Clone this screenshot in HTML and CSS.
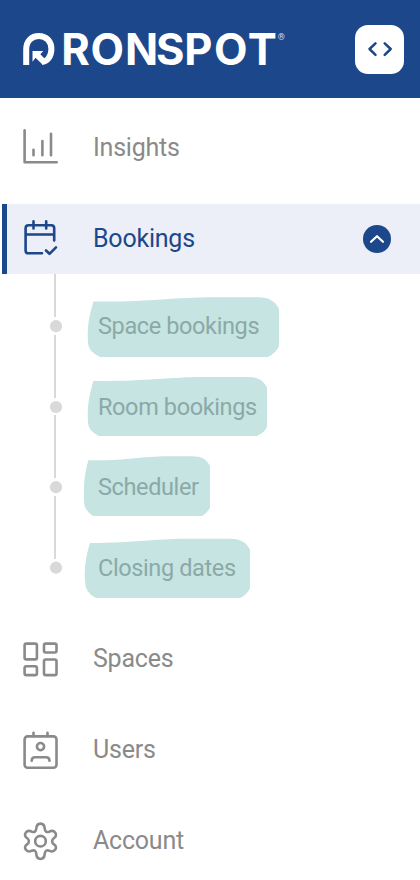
FILE: index.html
```html
<!DOCTYPE html>
<html lang="en">
<head>
<meta charset="utf-8">
<title>Ronspot</title>
<link rel="stylesheet" href="styles.css">
</head>
<body>
<header class="header">
  <svg class="logo" width="290" height="78" viewBox="20 10 290 78" role="img" aria-label="Ronspot">
    <path class="logo-mark" d="M26.2 65V49.500C26.200 41 31.500 36 38.800 36C46.400 36 51.400 41.500 51.400 49C51.400 56.500 47 61.800 42.200 61.800"/>
    <path class="logo-arrow" d="M32.500 51H43.300L40.300 54.300L45.500 59.500L43 65L35.500 57.800L32.500 61.800Z"/>
    <text class="logo-text" y="64.8" x="61.300 90.500 124.900 156 184.300 214 247.700">RONSPOT</text>
    <text class="logo-reg" x="277.7" y="39.9">®</text>
  </svg>
  <button class="toggle" aria-label="Collapse menu">
    <svg width="49" height="49" viewBox="0 0 49 49"><path d="M20.500 18.300L14.500 24L20.500 29.800M29.700 18.300L35.700 24L29.700 29.800"/></svg>
  </button>
</header>
<nav class="nav">
  <a class="item">
    <svg class="icon" viewBox="20 0 42 70"><path d="M24.600 17.300V49.300H56.700M33.500 36.800V42.200M42.400 28V42.200M51 20.800V42.200"/></svg>
    <span>Insights</span>
  </a>
  <a class="item active">
    <svg class="icon" viewBox="20 0 42 70"><path d="M42 49.300H28.500Q25.600 49.300 25.600 46.400V24.200Q25.600 21.200 28.500 21.200H51.300Q54.200 21.200 54.200 24.200V36.500M25.600 30.500H54.200M33.500 17.400V24.500M46.200 17.400V24.500M46 46.500L49.500 49.800L56 43.300"/></svg>
    <span>Bookings</span>
    <svg class="chevron" viewBox="0 0 28 28"><circle cx="14" cy="14" r="14"/><path d="M8 16.800L14 11.200L20 16.800"/></svg>
  </a>
  <div class="subnav">
    <svg class="rail" width="62" height="350" viewBox="0 274 62 350">
      <path d="M55 274V317M55 335V398M55 415V478M55 496V559"/>
      <circle cx="56" cy="326.200" r="6.100"/><circle cx="56" cy="407" r="6.100"/><circle cx="56" cy="487.200" r="6.100"/><circle cx="56" cy="567.700" r="6.100"/>
    </svg>
    <svg class="marks" width="220" height="350" viewBox="80 274 220 350">
      <path d="M93.500 301.500C155 302 170 297.200 215 297.200H258C269 297.200 275 301 279 309V346Q276 353 268 357H100Q88 351 88 343C87 325 89.500 315 93.500 301.500Z"/>
      <path d="M93.300 381C143 381.500 170 377 202 377H248C258 377 263 380 267 387.500V427Q264 433 257 436H99Q88 431 88 422C87 405 89.500 395 93.300 381Z"/>
      <path d="M88.300 460.200C125 461 140 456.200 168 456.200H192C202 456.200 206 459 210 466V508Q207 513 202 516H93Q84 510 84 502C83.500 485 84.500 474 88.300 460.200Z"/>
      <path d="M90 543C135 543 155 538.800 185 538.800H230C241 538.800 247 543 250 550V588Q247 595 240 598H96Q85 593 85 581C84 568 86 556 90 543Z"/>
    </svg>
    <ul class="sublist">
      <li>Space bookings</li>
      <li>Room bookings</li>
      <li>Scheduler</li>
      <li>Closing dates</li>
    </ul>
  </div>
  <a class="item">
    <svg class="icon" viewBox="20 0 42 70"><rect x="24.600" y="19.600" width="12.300" height="15.800" rx="1.700"/><rect x="44" y="19.600" width="12.500" height="8.900" rx="1.700"/><rect x="24.600" y="42.200" width="12.300" height="8.900" rx="1.700"/><rect x="44" y="35.500" width="12.500" height="15.600" rx="1.700"/></svg>
    <span>Spaces</span>
  </a>
  <a class="item">
    <svg class="icon" viewBox="20 0 42 70"><rect x="24.600" y="21.400" width="31.900" height="31.300" rx="3"/><path d="M33.500 17.800V21M47.500 17.800V21M31.700 45.700C31.700 42.800 33 42.300 35 42.300H46C48.500 42.300 49.500 43 49.500 45.700"/><circle cx="40.500" cy="31.600" r="3.600"/></svg>
    <span>Users</span>
  </a>
  <a class="item">
    <svg class="icon" viewBox="20 0 42 70"><path d="M36.300 22.500C36.700 16 44.300 16 44.700 22.500C44.900 25.600 46.700 26.700 49.200 25.700C54.500 23 58.500 29.200 54 32C51.500 33.800 51.500 36.600 54 38.400C58.500 41.200 54.500 47.400 49.200 44.700C46.700 43.700 44.900 44.800 44.700 47.900C44.300 54.600 36.700 54.600 36.300 47.900C36.100 44.800 34.300 43.700 31.800 44.700C26.500 47.400 22.500 41.200 27 38.400C29.500 36.600 29.500 33.800 27 32C22.500 29.200 26.500 23 31.800 25.700C34.300 26.700 36.100 25.600 36.300 22.500Z"/><circle cx="40.500" cy="35.200" r="5.300"/></svg>
    <span>Account</span>
  </a>
</nav>
</body>
</html>
```
FILE: styles.css
```css
* { box-sizing: border-box; }
body {
  margin: 0;
  background: #fff;
  font-family: Roboto, "Liberation Sans", sans-serif;
  color: #8a8a8a;
}
.header {
  display: flex;
  align-items: center;
  justify-content: space-between;
  height: 98px;
  padding: 0 16px 0 20px;
  background: #1c478a;
}
.logo { display: block; }
.logo-mark { fill: none; stroke: #fff; stroke-width: 6; }
.logo-arrow { fill: #fff; }
.logo-text {
  fill: #fff;
  font: 700 43.5px Inter, sans-serif;
}
.logo-reg { fill: #d5deeb; font: 9px Roboto, sans-serif; }
.toggle {
  width: 49px;
  height: 49px;
  padding: 0;
  border: 0;
  border-radius: 13px;
  background: #fff;
}
.toggle svg { display: block; }
.toggle path {
  fill: none;
  stroke: #1c478a;
  stroke-width: 2.5;
  stroke-linecap: round;
  stroke-linejoin: round;
}
.nav { padding-top: 15px; }
.item {
  display: flex;
  align-items: center;
  height: 70px;
  margin-bottom: 21px;
  padding: 0 29px 0 20px;
  font-size: 25px;
  letter-spacing: -0.22px;
}
.item span { margin: -2px 0 0 31px; }
.icon {
  flex: none;
  width: 42px;
  height: 70px;
  fill: none;
  stroke: #8a8a8a;
  stroke-width: 2.6;
  stroke-linecap: round;
  stroke-linejoin: round;
}
.active {
  margin: 0 0 0 2px;
  padding-left: 13px;
  border-left: 5px solid #1c478a;
  background: #eceff7;
  color: #1c478a;
}
.active .icon { stroke: #1c478a; }
.active .chevron { width: 28px; height: 28px; margin-left: auto; }
.chevron circle { fill: #1c478a; }
.chevron path {
  fill: none;
  stroke: #fff;
  stroke-width: 2.2;
  stroke-linecap: round;
  stroke-linejoin: round;
}
.subnav { position: relative; display: flex; height: 350px; }
.rail { flex: none; fill: #d9d9d9; }
.rail path { stroke: #d9d9d9; stroke-width: 2; }
.marks { position: absolute; left: 80px; top: 0; fill: #c6e4e1; }
.sublist {
  position: relative;
  margin: 0;
  padding: 12px 0 0 36px;
  list-style: none;
  font-size: 23.5px;
  letter-spacing: -0.38px;
  color: #8ba9a8;
}
.sublist li { height: 80.6px; line-height: 80.6px; }
```
